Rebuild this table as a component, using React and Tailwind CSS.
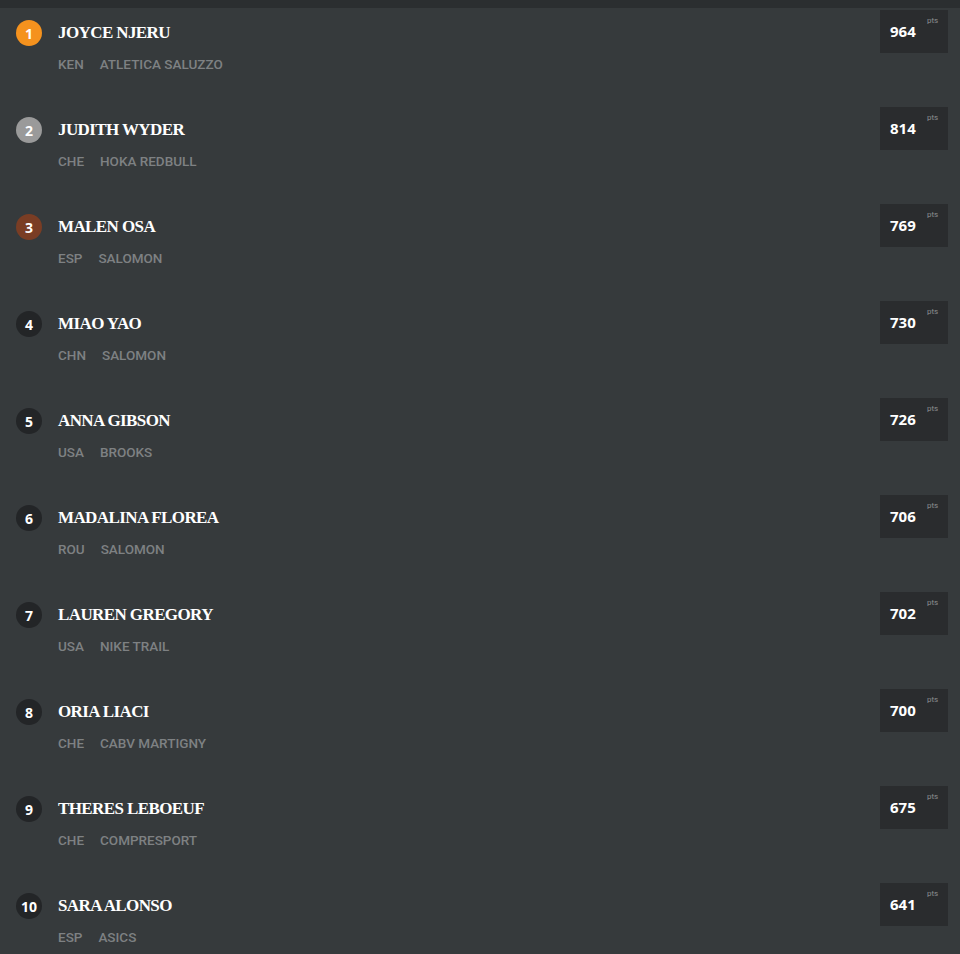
import React from 'react';

const runners = [
    { rank: 1, name: 'JOYCE NJERU', country: 'KEN', team: 'ATLETICA SALUZZO', pts: 964 },
    { rank: 2, name: 'JUDITH WYDER', country: 'CHE', team: 'HOKA REDBULL', pts: 814 },
    { rank: 3, name: 'MALEN OSA', country: 'ESP', team: 'SALOMON', pts: 769 },
    { rank: 4, name: 'MIAO YAO', country: 'CHN', team: 'SALOMON', pts: 730 },
    { rank: 5, name: 'ANNA GIBSON', country: 'USA', team: 'BROOKS', pts: 726 },
    { rank: 6, name: 'MADALINA FLOREA', country: 'ROU', team: 'SALOMON', pts: 706 },
    { rank: 7, name: 'LAUREN GREGORY', country: 'USA', team: 'NIKE TRAIL', pts: 702 },
    { rank: 8, name: 'ORIA LIACI', country: 'CHE', team: 'CABV MARTIGNY', pts: 700 },
    { rank: 9, name: 'THERES LEBOEUF', country: 'CHE', team: 'COMPRESPORT', pts: 675 },
    { rank: 10, name: 'SARA ALONSO', country: 'ESP', team: 'ASICS', pts: 641 },
];

const rankColor = (rank) => {
    if (rank === 1) return 'bg-[#f5921e]';
    if (rank === 2) return 'bg-[#9a9a9a]';
    if (rank === 3) return 'bg-[#7a3d24]';
    return 'bg-[#232527]';
};

const RunnerRow = ({ runner }) => (
    <div className="h-[97px] flex items-start pl-4 pr-3">
        <div className="flex-1 flex flex-col pt-[12px]">
            <div className="flex items-center h-[26px]">
                <span className={`w-[26px] h-[26px] rounded-full ${rankColor(runner.rank)} text-white text-[14px] font-bold flex items-center justify-center font-['Open_Sans',sans-serif]`}>
                    {runner.rank}
                </span>
                <span className="ml-4 text-white text-[17px] font-bold tracking-[-0.6px] font-['Liberation_Serif',serif]">
                    {runner.name}
                </span>
            </div>
            <div className="flex ml-[42px] mt-[8px] text-[13.5px] font-medium text-[#7e8183] font-['Roboto',sans-serif]">
                <span>{runner.country}</span>
                <span className="ml-4">{runner.team}</span>
            </div>
        </div>
        <div className="mt-[2px] w-[68px] h-[43px] bg-[#2a2c2e] relative flex items-center pl-[10px]">
            <span className="text-white text-[15px] font-bold font-['Open_Sans',sans-serif]">{runner.pts}</span>
            <span className="absolute top-[5px] left-[47px] text-[8px] text-[#8a8d8f] font-['Roboto',sans-serif]">pts</span>
        </div>
    </div>
);

export default function App() {
    return (
        <div className="w-[960px] h-[954px] bg-[#363a3c] overflow-hidden">
            <div className="h-[8px] bg-[#2b2e30]" />
            {runners.map(r => <RunnerRow key={r.rank} runner={r} />)}
        </div>
    );
}
